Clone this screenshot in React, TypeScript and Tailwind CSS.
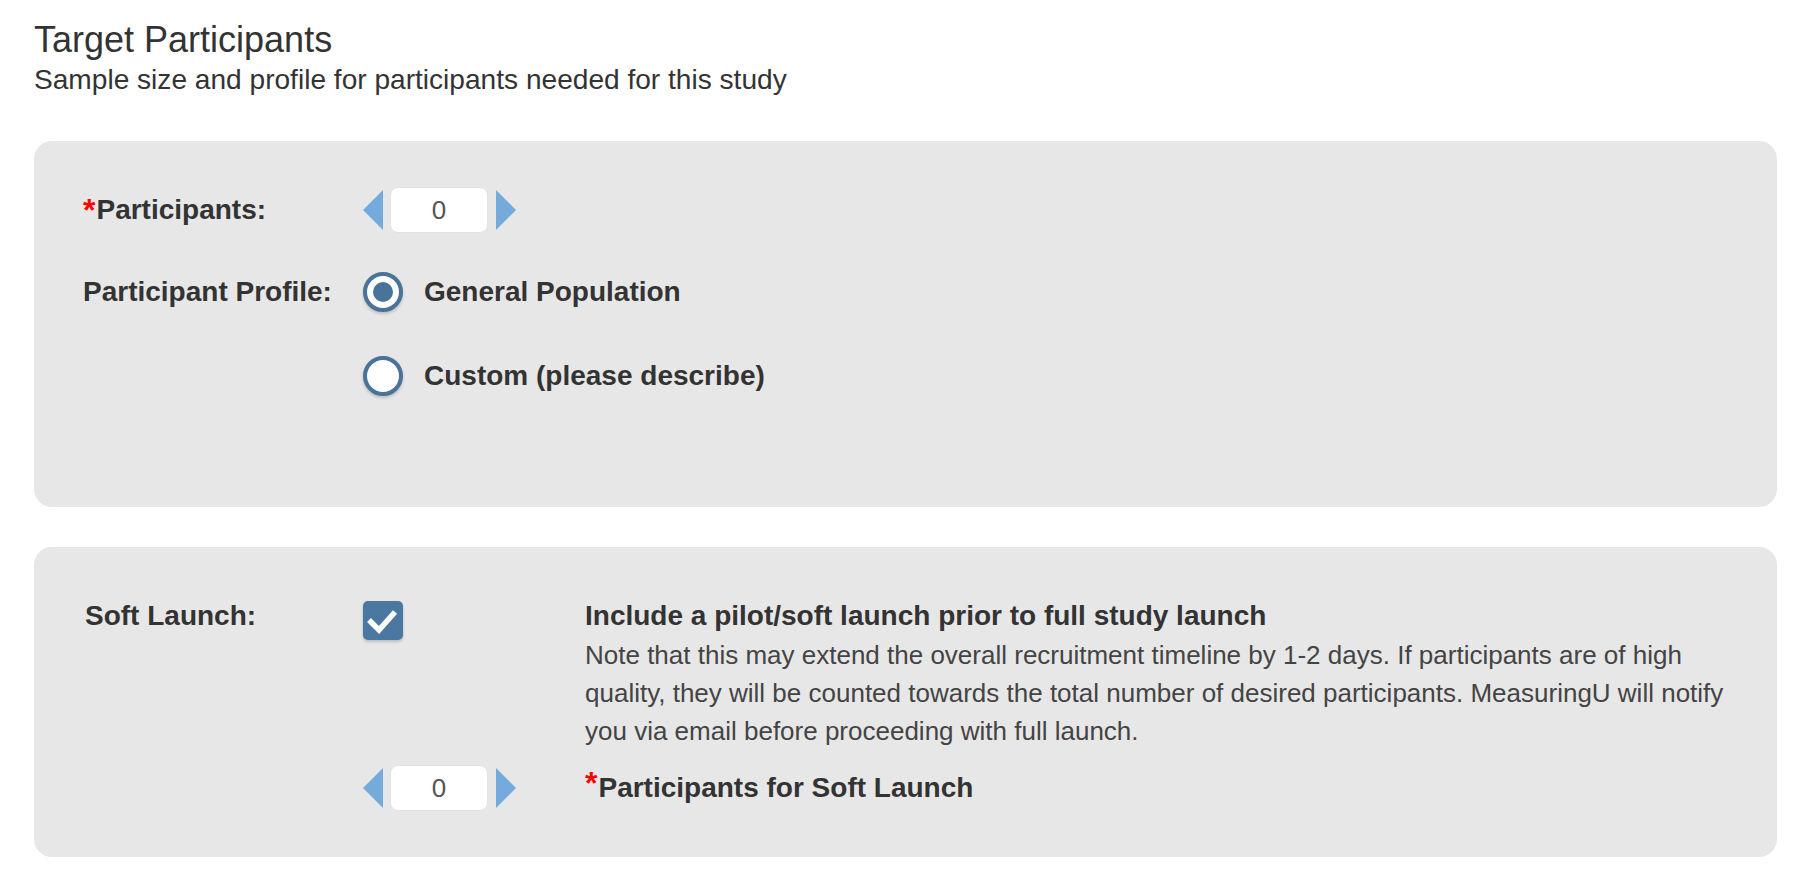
import React, { useState } from "react";

const font = "font-['Liberation_Sans',Arial,sans-serif]";

const Arrow: React.FC<{ dir: "left" | "right" }> = ({ dir }) => (
  <svg width="20" height="40" viewBox="0 0 20 40" className="shrink-0">
    <path
      d={dir === "left" ? "M20 0 L0 20 L20 40 Z" : "M0 0 L20 20 L0 40 Z"}
      fill="#75aadd"
    />
  </svg>
);

const Spinner: React.FC<{ value: number; onChange: (v: number) => void }> = ({
  value,
  onChange,
}) => (
  <div className="flex items-center">
    <button onClick={() => onChange(Math.max(0, value - 1))}>
      <Arrow dir="left" />
    </button>
    <div className="ml-[7px] flex h-[46px] w-[98px] items-center justify-center rounded-[8px] border border-[#dfe3e8] bg-white text-[26px] text-[#555]">
      {value}
    </div>
    <button className="ml-[8px]" onClick={() => onChange(value + 1)}>
      <Arrow dir="right" />
    </button>
  </div>
);

const Required: React.FC<{ children: React.ReactNode }> = ({ children }) => (
  <span className="flex items-start">
    <span className="mr-[1px] mt-[0px] text-[32px] leading-[32px] text-[#ff0000]">*</span>
    {children}
  </span>
);

const Radio: React.FC<{ checked: boolean; label: string; onSelect: () => void }> = ({
  checked,
  label,
  onSelect,
}) => (
  <label className="flex h-[40px] cursor-pointer items-center" onClick={onSelect}>
    <span className="flex h-[40px] w-[40px] items-center justify-center rounded-full border-[4px] border-[#4a7399] bg-white shadow-[0_2px_3px_rgba(0,0,0,0.18)]">
      {checked && <span className="h-[20px] w-[20px] rounded-full bg-[#4a7399]" />}
    </span>
    <span className="ml-[21px] text-[28px] font-bold text-[#333]">{label}</span>
  </label>
);

export default function App() {
  const [participants, setParticipants] = useState(0);
  const [softCount, setSoftCount] = useState(0);
  const [profile, setProfile] = useState("general");
  const [softLaunch, setSoftLaunch] = useState(true);

  return (
    <div className={`${font} min-h-[875px] bg-white pl-[34px] pr-[24px] pt-[19px]`}>
      {/* heading */}
      <h1 className="text-[36px] leading-[42px] text-[#333]">Target Participants</h1>
      <p className="mt-[3px] text-[28.1px] leading-[32px] text-[#333]">
        Sample size and profile for participants needed for this study
      </p>

      {/* participants panel */}
      <section className="mt-[45px] rounded-[18px] bg-[#e7e7e7] pb-[111px] pl-[49px] pt-[46px]">
        <div className="flex h-[46px] items-center">
          <div className="w-[280px] text-[28px] font-bold leading-[32px] text-[#333]">
            <Required>Participants:</Required>
          </div>
          <Spinner value={participants} onChange={setParticipants} />
        </div>
        <div className="mt-[39px] flex">
          <div className="flex h-[40px] w-[280px] items-center text-[28px] font-bold text-[#333]">
            Participant Profile:
          </div>
          <div className="flex flex-col gap-[44px]">
            <Radio
              checked={profile === "general"}
              label="General Population"
              onSelect={() => setProfile("general")}
            />
            <Radio
              checked={profile === "custom"}
              label="Custom (please describe)"
              onSelect={() => setProfile("custom")}
            />
          </div>
        </div>
      </section>

      {/* soft launch panel */}
      <section className="mt-[40px] grid grid-cols-[280px_222px_1fr] rounded-[18px] bg-[#e7e7e7] pb-[46px] pl-[49px] pr-[30px] pt-[53px]">
        <div className="ml-[2px] text-[28px] font-bold leading-[32px] text-[#333]">Soft Launch:</div>
        <div className="pt-[1px]">
          <button
            onClick={() => setSoftLaunch(!softLaunch)}
            className={`flex h-[39px] w-[40px] items-center justify-center rounded-[5px] shadow-[0_2px_3px_rgba(0,0,0,0.18)] ${
              softLaunch ? "bg-[#4b78a0]" : "border-[3px] border-[#4b78a0] bg-white"
            }`}
          >
            {softLaunch && (
              <svg width="40" height="39" viewBox="0 0 40 39">
                <path d="M6 19 L16 29 L32 11" fill="none" stroke="#fff" strokeWidth="5.5" />
              </svg>
            )}
          </button>
        </div>
        <div>
          <div className="text-[28px] font-bold leading-[32px] text-[#333]">
            Include a pilot/soft launch prior to full study launch
          </div>
          <p className="mt-[4px] text-[26px] leading-[38px] text-[#444]">
            Note that this may extend the overall recruitment timeline by 1-2 days. If participants are
            of high quality, they will be counted towards the total number of desired participants.
            MeasuringU will notify you via email before proceeding with full launch.
          </p>
        </div>

        <div />
        <div className="mt-[15px]">
          <Spinner value={softCount} onChange={setSoftCount} />
        </div>
        <div className="mt-[15px] flex h-[46px] items-center text-[28px] font-bold text-[#333]">
          <Required>Participants for Soft Launch</Required>
        </div>
      </section>
    </div>
  );
}
